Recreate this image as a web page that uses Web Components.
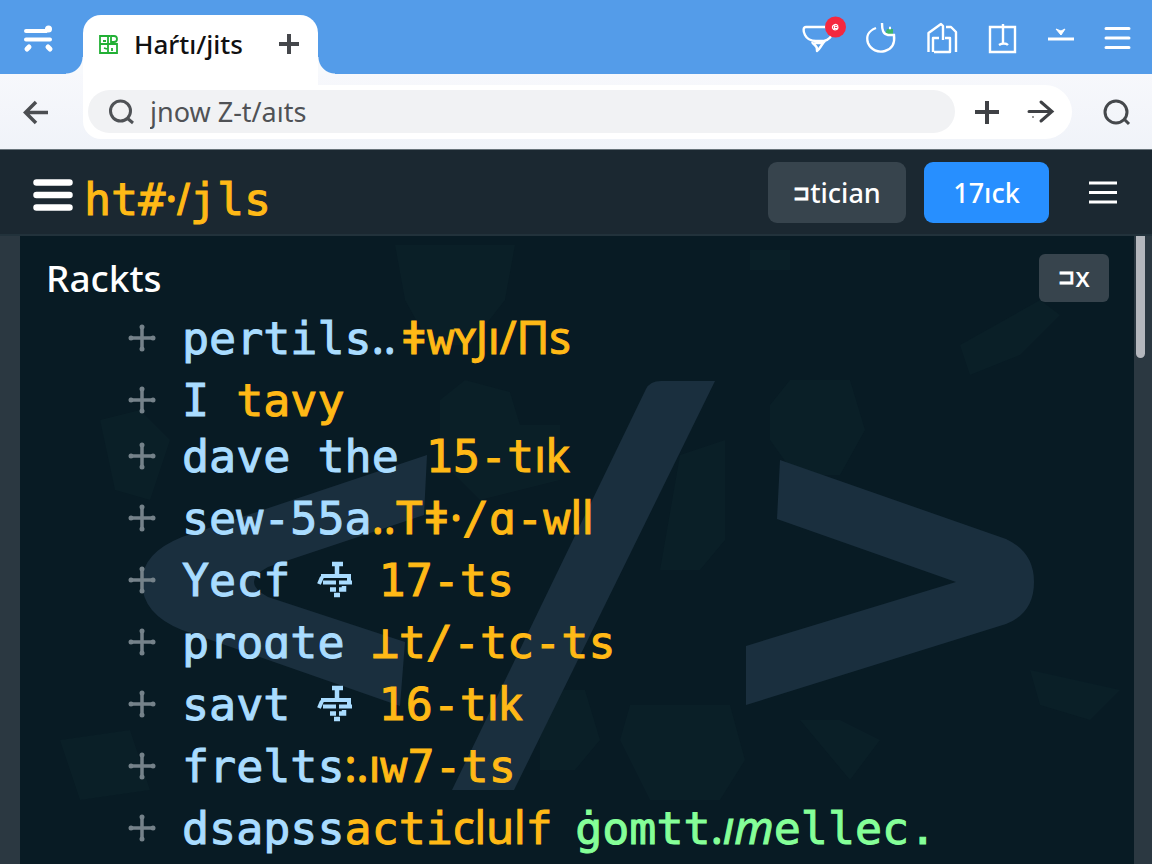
<!DOCTYPE html>
<html lang="en">
<head>
<meta charset="utf-8">
<meta name="viewport" content="width=device-width, initial-scale=1">
<title>Haŕtı/jits</title>
<style>
  html, body { margin: 0; height: 100%; }
  body { font-family: "Noto Sans", "Open Sans", sans-serif; background: #081b24; }
</style>
</head>
<body>
<code-app></code-app>

<script>
const ICONS = {
  app: ['8 0 60 74', `<g stroke="#fff" stroke-width="4" stroke-linecap="round" fill="none"><path d="M26 31H46L49 28M26 39.500H50"/><path d="M29 47L27 49M48 47L50 49" stroke-width="5"/></g><circle cx="48.500" cy="29" r="3.500" fill="#fff"/>`],
  inbox: ['788 0 60 74', `<g stroke="#fff" stroke-width="2.400" fill="none" stroke-linejoin="round"><path d="M826 27H806C803 27 803 31 805 35C807 39 811 41 816 41H824C829 40 832 36 832 33M812 42C814 46 818 45 817 51C820 49 821 45 825 41M814 43H824"/></g><circle cx="835.500" cy="27" r="10.500" fill="#f5283f"/><path d="M838 26C836 23 832 25 832.500 28C834 31 838 30 838 27L834.500 26V28.500H837" stroke="#fff" stroke-width="1.200" fill="none"/>`],
  power: ['848 0 60 74', `<path d="M887 29h6v5h-8z" fill="#3fb56b"/><path d="M876 28C868 31 866 37 868 43C871 50 878 53 885 51C892 49 895 43 894 35H888C883 34 882 30 882 23M889 28h2" stroke="#fff" stroke-width="2.400" fill="none"/>`],
  home: ['908 0 60 74', `<g stroke="#fff" stroke-width="2.400" fill="none" stroke-linejoin="round"><path d="M928.500 52V33L941 24L943 26V40M933 52V38H939M945 38H950V52H934M956 52V32L951 27H946"/></g>`],
  panel: ['968 0 60 74', `<g stroke="#fff" stroke-width="2.400" fill="none"><path d="M990 27H1015V52H990ZM1003 24V44M999 45C1002 43 1006 43 1008 45"/></g>`],
  down: ['1028 0 60 74', `<path d="M1048 39H1074" stroke="#fff" stroke-width="3"/><path d="M1056 29L1061 35L1065 29L1061 31Z" fill="#fff" stroke="#fff"/>`],
  menu: ['1088 0 60 74', `<path d="M1106 28.500H1129M1106 38H1129M1106 47.500H1129" stroke="#fff" stroke-width="3" stroke-linecap="round"/>`],
  favicon: ['98 33 20 20', `<g stroke="#22b035" stroke-width="1.800" fill="none"><path d="M110 35H100V52H117V43H100M108 35V52M111 35H114C118 35 118 41 114 41H111ZM103 40H106M104 47L107 48M112 47V50"/></g>`],
  add: ['277 31 24 24', `<path d="M279 43H299M289 33V53" stroke="#45474b" stroke-width="4"/>`],
  plus: ['971 97 30 30', `<path d="M975 112H999M987 101V124" stroke="#3f4145" stroke-width="4"/>`],
  go: ['1025 98 30 30', `<g stroke="#3f4145" stroke-width="3" fill="none" stroke-linecap="round"><path d="M1029 112.500H1052M1041 103L1052 112.500L1041 122"/></g><circle cx="1033" cy="118" r="1" fill="#777"/>`],
  back: ['21 97 30 30', `<path d="M48 112.500H26M36 102L25.500 112.500L36 123" stroke="#4c4e52" stroke-width="3.500" fill="none"/>`],
  search: ['106 97 30 30', `<g stroke="#4f5256" stroke-width="3" fill="none"><circle cx="120.500" cy="111" r="10"/><path d="M127 118L133 123"/></g>`],
  find: ['1102 97 30 30', `<g stroke="#45484c" stroke-width="3" fill="none"><circle cx="1116" cy="112" r="11"/><path d="M1124 119L1129 124"/></g>`],
  burger: ['32 173 42 38', `<path d="M36.500 182.500H69.500M36.500 195H69.500M36.500 207.500H69.500" stroke="#fff" stroke-width="6.500" stroke-linecap="round"/>`],
  lines: ['1087 178 32 30', `<path d="M1089 184H1117M1089 193.500H1117M1089 203H1117" stroke="#fff" stroke-width="3"/>`],
  cross: ['128 323 28 30', `<g stroke="#75828a" stroke-width="3.500" fill="none"><path d="M130 338H154M142 326V350"/></g><g fill="#75828a"><circle cx="131" cy="338" r="2.500"/><circle cx="153" cy="338" r="2.500"/><circle cx="142" cy="327" r="2.500"/><circle cx="142" cy="349" r="2.500"/></g>`],
  mark: ['315 560 34 36', `<g stroke="#a9dcff" fill="none"><path d="M330 563H341M335 563V573" stroke-width="4.500"/><path d="M317 583L320 576M319 575H349M321 581.500H334M337 581.500H350M347 575V583" stroke-width="4"/><path d="M328 588.500H334M337 588.500H342V585M332 594H338" stroke-width="4.500"/></g>`],
};
const define = (name, html) => {
  const template = document.createElement('template');
  template.innerHTML = html.trim();
  customElements.define(name, class extends HTMLElement {
    constructor() {
      super();
      this.attachShadow({ mode: 'open' }).append(template.content.cloneNode(true));
    }
  });
};

customElements.define('ui-icon', class extends HTMLElement {
  connectedCallback() {
    if (this.shadowRoot) return;
    const [box, art] = ICONS[this.getAttribute('name')];
    const [, , w, h] = box.split(' ');
    this.attachShadow({ mode: 'open' }).innerHTML =
      `<style>:host{display:inline-block;flex:none}svg{display:block;overflow:visible}</style>
       <svg viewBox="${box}" width="${w}" height="${h}" aria-hidden="true">${art}</svg>`;
  }
});

const RESET = `button{display:flex;align-items:center;justify-content:center;margin:0;padding:0;border:0;background:none;color:inherit;font:inherit;cursor:pointer}`;

define('browser-tab', `
<style>
  :host { display: flex; align-items: center; position: relative; z-index: 1; box-sizing: border-box;
    width: 235px; height: 70px; margin: 0 0 -11px; padding: 0 17px 13px 15px; background: #fff;
    border-radius: 18px 18px 0 0; color: #111; font-size: 26px; font-weight: 500; }
  :host::before, :host::after { content: ""; position: absolute; bottom: 11px; width: 17px; height: 17px; }
  :host::before { right: 100%; background: radial-gradient(circle at 0 0, #549ce9 16px, #f7f9fc 17px); }
  :host::after { left: 100%; background: radial-gradient(circle at 100% 0, #549ce9 16px, #f7f9fc 17px); }
  span { flex: 1; padding-left: 16px; white-space: nowrap; }
  ${RESET}
</style>
<ui-icon name="favicon"></ui-icon><span><slot></slot></span>
<button aria-label="New tab"><ui-icon name="add"></ui-icon></button>`);

define('tab-strip', `
<style>
  :host { display: flex; align-items: flex-end; height: 74px; padding: 0 4px 0 8px; background: #549ce9; }
  .lead { width: 75px; flex: none; display: flex; }
  nav { display: flex; margin-left: auto; }
  ${RESET}
</style>
<div class="lead"><button aria-label="Workspaces"><ui-icon name="app"></ui-icon></button></div>
<browser-tab>Haŕtı/jits</browser-tab>
<nav aria-label="Browser tools">
  <button aria-label="Inbox"><ui-icon name="inbox"></ui-icon></button>
  <button aria-label="Power"><ui-icon name="power"></ui-icon></button>
  <button aria-label="Home"><ui-icon name="home"></ui-icon></button>
  <button aria-label="Panel"><ui-icon name="panel"></ui-icon></button>
  <button aria-label="Downloads"><ui-icon name="down"></ui-icon></button>
  <button aria-label="Menu"><ui-icon name="menu"></ui-icon></button>
</nav>`);

define('address-bar', `
<style>
  :host { display: flex; align-items: center; box-sizing: border-box; height: 76px; padding: 0 20px 0 21px;
    background: linear-gradient(#f7f8fc, #f0f3f9); border-bottom: 1px solid #69747c; }
  form { display: flex; align-items: center; flex: 1; box-sizing: border-box; height: 54px; margin: 0 30px 0 32px;
    padding: 0 17px 0 5px; background: #fff; border-radius: 0 27px 27px 18px; }
  label { display: flex; align-items: center; flex: 1; height: 43px; padding-left: 18px; margin-right: 16px;
    background: #f1f2f4; border-radius: 22px; }
  input { flex: 1; min-width: 0; margin-left: 14px; padding: 0; border: 0; outline: 0; background: none;
    color: #505256; font: 27px/36px "Noto Sans", sans-serif; }
  form button + button { margin-left: 24px; }
  ${RESET}
</style>
<button aria-label="Back"><ui-icon name="back"></ui-icon></button>
<form>
  <label><ui-icon name="search"></ui-icon><input type="text" value="jnow Z-t/aıts" aria-label="Address"></label>
  <button type="button" aria-label="Add"><ui-icon name="plus"></ui-icon></button>
  <button type="button" aria-label="Go"><ui-icon name="go"></ui-icon></button>
</form>
<button aria-label="Find"><ui-icon name="find"></ui-icon></button>`);

define('action-button', `
<style>
  :host { display: block; color: #fff; font-size: 27px; font-weight: 500; }
  ${RESET}
  button { width: 138px; height: 61px; border-radius: 9px; background: #37444d; white-space: nowrap; }
  :host([primary]) button { width: 125px; background: #278fff; }
  :host([compact]) button { box-sizing: border-box; width: 70px; height: 48px; padding-bottom: 4px; border-radius: 6px; }
  ::slotted(small) { font-size: 20px; -webkit-text-stroke: 1px currentColor; }
</style>
<button><slot></slot></button>`);

define('site-header', `
<style>
  :host { display: flex; align-items: center; box-sizing: border-box; height: 86px; padding: 0 33px 0 32px;
    background: #1b2831; border-bottom: 2px solid #22323b; }
  h1 { flex: 1; margin: 0; padding: 14px 0 0 10px; font-size: 45px; font-weight: 400; line-height: 56px; white-space: nowrap; }
  action-button + action-button { margin: 0 38px 0 18px; }
  ${RESET}
</style>
<button aria-label="Navigation"><ui-icon name="burger"></ui-icon></button>
<h1><code-token tone="gold">ht#</code-token><code-token tone="gold" face="narrow">·</code-token><code-token tone="gold" face="slim">/</code-token><code-token tone="gold">jls</code-token></h1>
<action-button><small>⊐</small>tician</action-button>
<action-button primary>17ıck</action-button>
<button aria-label="More"><ui-icon name="lines"></ui-icon></button>`);

define('code-token', `
<style>
  :host { display: inline; white-space: pre; color: #a9dcff; font-family: "DejaVu Sans Mono", monospace; -webkit-text-stroke: 1px currentColor; }
  :host([tone="gold"]) { color: #ffb916; }
  :host([tone="green"]) { color: #85ff98; }
  :host([face="narrow"]), :host([face="slanted"]) { font-family: "Noto Sans", sans-serif; }
  :host([face="slim"]) { font-family: "Liberation Sans", sans-serif; }
  :host([face="slanted"]) { font-style: italic; }
</style><slot></slot>`);

define('code-row', `
<style>
  :host { display: flex; align-items: center; height: 62px; font-size: 45px; line-height: 62px; white-space: nowrap; }
  :host([tight]) { height: 50px; margin-bottom: 6px; line-height: 50px; }
  ui-icon { margin-right: 26px; }
  ::slotted(ui-icon) { vertical-align: bottom; margin: 0 0 15px; }
</style><ui-icon name="cross"></ui-icon><div><slot></slot></div>`);

define('code-panel', `
<style>
  :host { display: flex; flex: 1; background: #2b3841; }
  main { position: relative; flex: 1; min-width: 0; margin-left: 20px; padding: 18px 25px 0 26px; overflow: hidden; background: #081b24; }
  .art { position: absolute; top: 0; left: 0; width: 100%; }
  header { position: relative; display: flex; align-items: flex-start; justify-content: space-between; height: 53px; }
  h2 { margin: 0; color: #fff; font-size: 37px; font-weight: 500; line-height: 48px; }
  .rows { position: relative; padding-left: 82px; }
  .rail { width: 18px; flex: none; }
  .thumb { width: 9px; height: 122px; margin-left: 2px; background: #b4b7bd; border-radius: 0 0 5px 5px; }
</style>
<main>
  <svg class="art" viewBox="20 236 1114 628" aria-hidden="true">
    <g fill="#0a1f27">
      <path d="M395 245H515L505 300L470 345H430L405 300ZM440 400L465 380L510 392L520 425H560V480L480 500L440 460ZM770 405L790 380H850L865 430L840 475H795L770 440ZM680 455L725 440V540L700 570H660ZM540 690H585L600 740L575 770H540ZM630 705H730L745 760L720 800H650L620 740ZM1030 670L1120 690L1090 720L1040 705ZM960 345L1040 300L1060 315L1020 355L970 375ZM800 720H840L880 740L850 780ZM100 420L140 410L170 440L150 500L115 490ZM60 740L130 730L150 790L80 800ZM750 250H790V270H750Z"/>
    </g>
    <g fill="#1a2f3e">
      <path d="M427 455L424 515L268 567Q240 582 268 597L405 642L400 706L182 630Q142 614 142 582Q142 553 182 537Z"/>
      <path d="M661 381H715L514 790H452L646 389Q650 381 661 381Z"/>
      <path d="M780 460L1006 539Q1034 552 1034 582Q1034 613 1006 624L746 705V646L956 582L777 519Z"/>
    </g>
  </svg>
  <header><h2>Rackts</h2><action-button compact><small>⊐</small>x</action-button></header>
  <div class="rows" role="list">
    <code-row role="listitem"><code-token>pertils</code-token><code-token face="narrow">..&#8202;</code-token><code-token tone="gold">ǂw</code-token><code-token tone="gold" face="narrow">ʏJı/Πs</code-token></code-row>
    <code-row role="listitem"><code-token>I </code-token><code-token tone="gold">tavy</code-token></code-row>
    <code-row role="listitem" tight><code-token>dave the </code-token><code-token tone="gold">15-t</code-token><code-token tone="gold" face="narrow">ık</code-token></code-row>
    <code-row role="listitem"><code-token>sew-55a</code-token><code-token tone="gold" face="narrow">..</code-token><code-token tone="gold">Tǂ</code-token><code-token tone="gold" face="narrow">·</code-token><code-token tone="gold">/ɑ-w</code-token><code-token tone="gold" face="narrow">ll</code-token></code-row>
    <code-row role="listitem"><code-token>Yecf </code-token><ui-icon name="mark"></ui-icon><code-token tone="gold"> 17-ts</code-token></code-row>
    <code-row role="listitem"><code-token>proɑte </code-token><code-token tone="gold">⊥t/-tc-ts</code-token></code-row>
    <code-row role="listitem"><code-token>savt </code-token><ui-icon name="mark"></ui-icon><code-token tone="gold"> 16-t</code-token><code-token tone="gold" face="narrow">ık</code-token></code-row>
    <code-row role="listitem"><code-token>frelts</code-token><code-token tone="gold" face="narrow">:.ı</code-token><code-token tone="gold">w7-ts</code-token></code-row>
    <code-row role="listitem"><code-token>dsapss</code-token><code-token tone="gold">acti</code-token><code-token tone="gold" face="narrow">clul</code-token><code-token tone="gold">f</code-token><code-token face="narrow">&#8194;</code-token><code-token tone="green">ġomtt</code-token><code-token tone="green" face="narrow">.</code-token><code-token tone="green" face="slanted">ım</code-token><code-token tone="green">ellec.</code-token></code-row>
  </div>
</main>
<div class="rail"><div class="thumb"></div></div>`);

define('code-app', `
<style>:host { display: flex; flex-direction: column; min-height: 100vh; }</style>
<tab-strip></tab-strip>
<address-bar></address-bar>
<site-header></site-header>
<code-panel></code-panel>`);
</script>
</body>
</html>
